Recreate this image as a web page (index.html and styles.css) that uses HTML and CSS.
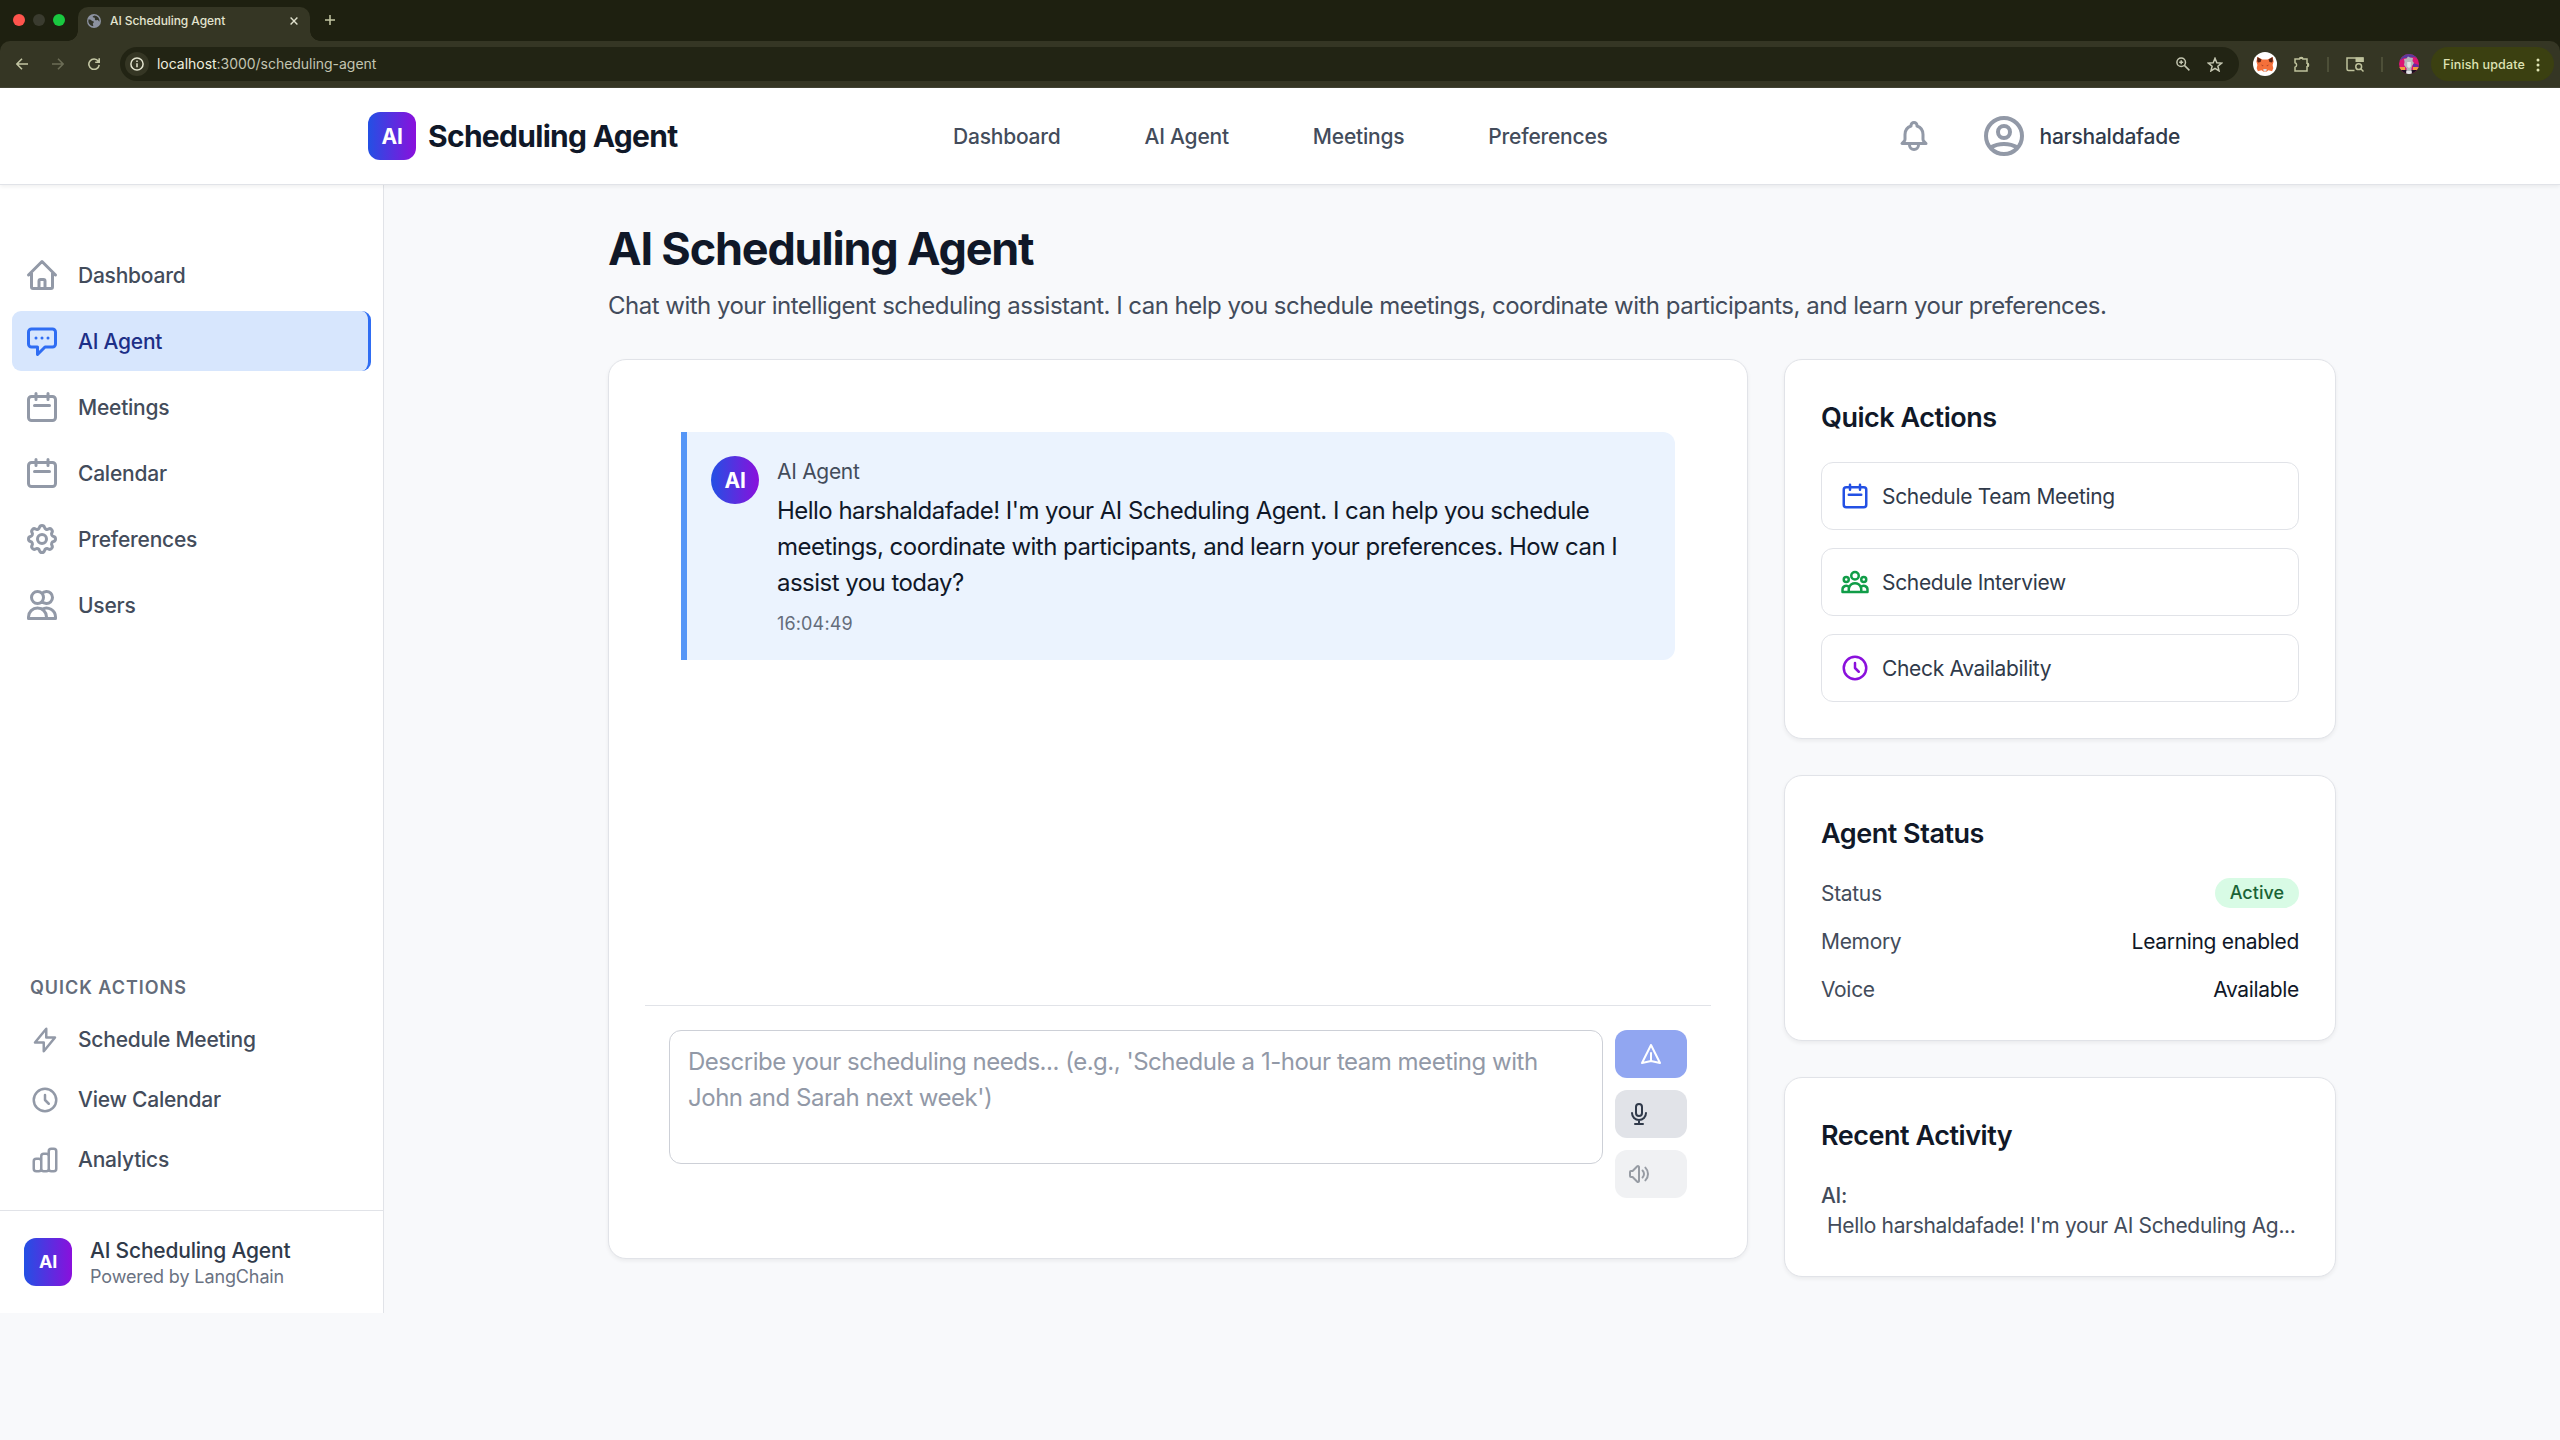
FILE: index.html
```html
<!DOCTYPE html>
<html lang="en">
<head>
<meta charset="utf-8">
<title>AI Scheduling Agent</title>
<link rel="stylesheet" href="styles.css">
</head>
<body>
<svg class="sprite" aria-hidden="true">
  <symbol id="home" viewBox="0 0 24 24"><path d="M3 12l2-2m0 0l7-7 7 7M5 10v10a1 1 0 001 1h3m10-11l2 2m-2-2v10a1 1 0 01-1 1h-3m-6 0a1 1 0 001-1v-4a1 1 0 011-1h2a1 1 0 011 1v4a1 1 0 001 1m-6 0h6"/></symbol>
  <symbol id="chat" viewBox="0 0 24 24"><path d="M8 10h.01M12 10h.01M16 10h.01M9 16H5a2 2 0 01-2-2V6a2 2 0 012-2h14a2 2 0 012 2v8a2 2 0 01-2 2h-5l-5 5v-5z"/></symbol>
  <symbol id="calendar" viewBox="0 0 24 24"><path d="M8 7V3m8 4V3m-9 8h10M5 21h14a2 2 0 002-2V7a2 2 0 00-2-2H5a2 2 0 00-2 2v12a2 2 0 002 2z"/></symbol>
  <symbol id="cog" viewBox="0 0 24 24"><path d="M10.325 4.317c.426-1.756 2.924-1.756 3.35 0a1.724 1.724 0 002.573 1.066c1.543-.94 3.31.826 2.37 2.37a1.724 1.724 0 001.065 2.572c1.756.426 1.756 2.924 0 3.35a1.724 1.724 0 00-1.066 2.573c.94 1.543-.826 3.31-2.37 2.37a1.724 1.724 0 00-2.572 1.065c-.426 1.756-2.924 1.756-3.35 0a1.724 1.724 0 00-2.573-1.066c-1.543.94-3.31-.826-2.37-2.37a1.724 1.724 0 00-1.065-2.572c-1.756-.426-1.756-2.924 0-3.35a1.724 1.724 0 001.066-2.573c-.94-1.543.826-3.31 2.37-2.37.996.608 2.296.07 2.572-1.065z"/><path d="M15 12a3 3 0 11-6 0 3 3 0 016 0z"/></symbol>
  <symbol id="users" viewBox="0 0 24 24"><path d="M12 4.354a4 4 0 110 5.292M15 21H3v-1a6 6 0 0112 0v1zm0 0h6v-1a6 6 0 00-9-5.197M13 7a4 4 0 11-8 0 4 4 0 018 0z"/></symbol>
  <symbol id="bolt" viewBox="0 0 24 24"><path d="M13 10V3L4 14h7v7l9-11h-7z"/></symbol>
  <symbol id="clock" viewBox="0 0 24 24"><path d="M12 8v4l3 3m6-3a9 9 0 11-18 0 9 9 0 0118 0z"/></symbol>
  <symbol id="chart" viewBox="0 0 24 24"><path d="M9 19v-6a2 2 0 00-2-2H5a2 2 0 00-2 2v6a2 2 0 002 2h2a2 2 0 002-2zm0 0V9a2 2 0 012-2h2a2 2 0 012 2v10m-6 0a2 2 0 002 2h2a2 2 0 002-2m0 0V5a2 2 0 012-2h2a2 2 0 012 2v14a2 2 0 01-2 2h-2a2 2 0 01-2-2z"/></symbol>
  <symbol id="group" viewBox="0 0 24 24"><path d="M17 20h5v-2a3 3 0 00-5.356-1.857M17 20H7m10 0v-2c0-.656-.126-1.283-.356-1.857M7 20H2v-2a3 3 0 015.356-1.857M7 20v-2c0-.656.126-1.283.356-1.857m0 0a5.002 5.002 0 019.288 0M15 7a3 3 0 11-6 0 3 3 0 016 0zm6 3a2 2 0 11-4 0 2 2 0 014 0zM7 10a2 2 0 11-4 0 2 2 0 014 0z"/></symbol>
  <symbol id="send" viewBox="0 0 24 24"><path d="M12 19l9 2-9-18-9 18 9-2zm0 0v-8"/></symbol>
  <symbol id="mic" viewBox="0 0 24 24"><path d="M19 11a7 7 0 01-7 7m0 0a7 7 0 01-7-7m7 7v4m0 0H8m4 0h4m-4-8a3 3 0 01-3-3V5a3 3 0 116 0v6a3 3 0 01-3 3z"/></symbol>
  <symbol id="volume" viewBox="0 0 24 24"><path d="M15.536 8.464a5 5 0 010 7.072m2.828-9.9a9 9 0 010 12.728M5.586 15H4a1 1 0 01-1-1v-4a1 1 0 011-1h1.586l4.707-4.707C10.923 3.663 12 4.109 12 5v14c0 .891-1.077 1.337-1.707.707L5.586 15z"/></symbol>
  <symbol id="bell" viewBox="0 0 24 24"><path d="M15 17h5l-1.405-1.405A2.032 2.032 0 0118 14.158V11a6.002 6.002 0 00-4-5.659V5a2 2 0 10-4 0v.341C7.67 6.165 6 8.388 6 11v3.159c0 .538-.214 1.055-.595 1.436L4 17h5m6 0v1a3 3 0 11-6 0v-1m6 0H9"/></symbol>
  <symbol id="user" viewBox="0 0 24 24"><path d="M5.121 17.804A13.937 13.937 0 0112 16c2.5 0 4.847.655 6.879 1.804M15 10a3 3 0 11-6 0 3 3 0 016 0zm6 2a9 9 0 11-18 0 9 9 0 0118 0z"/></symbol>
</svg>

<div class="browser">
  <div class="tabstrip">
    <div class="lights"><i class="light close"></i><i class="light minimize"></i><i class="light maximize"></i></div>
    <div class="tab">
      <svg class="favicon" viewBox="0 0 14 14"><circle cx="7" cy="7" r="7" fill="#8c92a0"/><path d="M1.4 5.6c1.6-.3 2.5.2 3.2 1 .8.9 2 .4 2.2 1.3.2 1-1.200 1.200-1 2.200.1.800.7 1.300.3 2.200A5.600 5.600 0 0 1 1.400 5.600zM7.200 1.400c-.8.600-1.800.9-1.500 1.700.3.7 1.500.2 2 .9.500.8-.2 1.500.5 2 .8.600 1.600-.3 2.500 0 .8.300.8 1.400 1.800 1.400A5.600 5.600 0 0 0 7.200 1.400z" fill="#33352a"/></svg>
      <span class="tab-title">AI Scheduling Agent</span>
      <svg class="tab-close" viewBox="0 0 8 8"><path d="M.6.6l6.800 6.800M7.400.6L.6 7.400"/></svg>
    </div>
    <svg class="tab-new" viewBox="0 0 10 10"><path d="M5 0v10M0 5h10"/></svg>
  </div>
  <div class="toolbar">
    <div class="nav-buttons">
      <svg viewBox="0 0 12 12"><path d="M12 6H1M6 .8L.8 6 6 11.200"/></svg>
      <svg class="dim" viewBox="0 0 12 12"><path d="M0 6h11M6 .8L11.200 6 6 11.200"/></svg>
      <svg viewBox="0 0 12 12"><path d="M10.300 3.200A5.200 5.200 0 1 0 11.200 6.900M11.200.2v4H7.200"/></svg>
    </div>
    <div class="address">
      <span class="site-info"><svg viewBox="0 0 14 14"><circle cx="7" cy="7" r="6.100"/><path d="M7 6.200v4M7 3.600v1.400"/></svg></span>
      <span class="url"><b>localhost</b>:3000/scheduling-agent</span>
      <svg class="zoom-icon" viewBox="0 0 14 14"><circle cx="5.200" cy="5.200" r="4.300"/><path d="M8.400 8.400l5 5M5.200 3.200v4M3.200 5.200h4"/></svg>
      <svg class="star-icon" viewBox="0 0 15 14"><path d="M7.500 1.200l1.700 4.200 4.500.3-3.500 2.900 1.100 4.400-3.800-2.400L3.700 13l1.100-4.400L1.300 5.700l4.500-.3z"/></svg>
    </div>
    <svg class="fox" viewBox="0 0 24 24"><circle cx="12" cy="12" r="12" fill="#fff"/><path d="M4.400 5l5 2.600h5.200l5-2.600 1 4.600-1 3.400.7 3.200-1.200 3-3.600-1-2 1.600h-3l-2-1.600-3.600 1-1.200-3 .7-3.200-1-3.400z" fill="#f4703a"/><path d="M4.400 5l4 2.600-.8 2.400-2.400.6-1-1.400zM19.600 5l-4 2.600.8 2.400 2.400.6 1-1.400z" fill="#5b2415"/><path d="M7.600 12.600l2.800.6-.4 1.400zM16.400 12.600l-2.800.6.4 1.400z" fill="#b3452a"/><path d="M10.300 17h3.400l-.4 2.400h-2.600z" fill="#d9dbe2"/></svg>
    <svg class="puzzle" viewBox="0 0 16 16"><path d="M1 3h4.500a1.700 1.500 0 0 1 3.400 0H13v4.300a1.600 1.700 0 0 1 0 3.400V15H1v-3.800a2.300 2.300 0 0 0 0-4.400z"/><path class="solid" d="M5.300 3a1.900 2 0 0 1 3.800 0zM13 7.100a2 1.900 0 0 1 0 3.800z"/></svg>
    <i class="separator"></i>
    <svg class="panel" viewBox="0 0 18 15"><path d="M8.500 13.500H2.500a1.500 1.500 0 0 1-1.500-1.500V1h16v4"/><path class="solid" d="M9.500.5H17.500V5H9.500z"/><circle cx="12.700" cy="9.700" r="2.900"/><path d="M14.800 11.800l2.700 2.700"/></svg>
    <i class="separator"></i>
    <svg class="profile" viewBox="0 0 20 20"><defs><clipPath id="disc"><circle cx="10" cy="10" r="10"/></clipPath></defs><g clip-path="url(#disc)"><path d="M0 0h20v20H0z" fill="#dc1574"/><path d="M0 0h20v5l-5-2-5 1-5 0-5 3z" fill="#5b3a9c"/><path d="M14 9l6 2v4h-6z" fill="#6a2aa0"/><path d="M0 13h6v3H0zM14 13h6v3h-6z" fill="#f59a3c"/><path d="M0 16h20v4H0z" fill="#1b1020"/><path d="M7 20l.7-5.500L5 11l.5-3L5 5l2.500-.5L9 2.500l2 1L14 4l-.5 3 1.500 2-2 3-.7 3 .7 5z" fill="#b4b6ba"/><path d="M8.200 8h3.600v4.500l-1.800 1.500-1.800-1.500zM7.500 17h5v3h-5z" fill="#e2e4e6"/></g></svg>
    <div class="update"><span>Finish update</span><svg viewBox="0 0 4 14"><circle cx="2" cy="2" r="1.500"/><circle cx="2" cy="7" r="1.500"/><circle cx="2" cy="12" r="1.500"/></svg></div>
  </div>
</div>

<header class="site-header">
  <div class="header-inner">
    <div class="brand"><span class="logo">AI</span><span class="brand-name">Scheduling Agent</span></div>
    <nav class="top-nav"><a>Dashboard</a><a>AI Agent</a><a>Meetings</a><a>Preferences</a></nav>
    <div class="account">
      <svg class="icon i36"><use href="#bell"/></svg>
      <div class="account-user"><svg class="icon i48"><use href="#user"/></svg><span>harshaldafade</span></div>
    </div>
  </div>
</header>

<div class="shell">
  <aside class="sidebar">
    <nav class="side-nav">
      <a class="side-link"><svg class="icon i36"><use href="#home"/></svg><span>Dashboard</span></a>
      <a class="side-link active"><svg class="icon i36"><use href="#chat"/></svg><span>AI Agent</span></a>
      <a class="side-link"><svg class="icon i36"><use href="#calendar"/></svg><span>Meetings</span></a>
      <a class="side-link"><svg class="icon i36"><use href="#calendar"/></svg><span>Calendar</span></a>
      <a class="side-link"><svg class="icon i36"><use href="#cog"/></svg><span>Preferences</span></a>
      <a class="side-link"><svg class="icon i36"><use href="#users"/></svg><span>Users</span></a>
    </nav>
    <div class="side-actions">
      <h3>Quick Actions</h3>
      <a class="side-action"><svg class="icon i30"><use href="#bolt"/></svg><span>Schedule Meeting</span></a>
      <a class="side-action"><svg class="icon i30"><use href="#clock"/></svg><span>View Calendar</span></a>
      <a class="side-action"><svg class="icon i30"><use href="#chart"/></svg><span>Analytics</span></a>
    </div>
    <div class="side-footer">
      <span class="logo small">AI</span>
      <div><p class="footer-name">AI Scheduling Agent</p><p class="footer-sub">Powered by LangChain</p></div>
    </div>
  </aside>

  <main class="main">
    <div class="page">
      <h1>AI Scheduling Agent</h1>
      <p class="lead">Chat with your intelligent scheduling assistant. I can help you schedule meetings, coordinate with participants, and learn your preferences.</p>
      <div class="columns">
        <section class="card chat">
          <div class="messages">
            <article class="message">
              <span class="avatar">AI</span>
              <div class="message-body">
                <p class="author">AI Agent</p>
                <p class="text">Hello harshaldafade! I'm your AI Scheduling Agent. I can help you schedule<br>meetings, coordinate with participants, and learn your preferences. How can I<br>assist you today?</p>
                <p class="time">16:04:49</p>
              </div>
            </article>
          </div>
          <div class="composer">
            <div class="input">Describe your scheduling needs... (e.g., 'Schedule a 1-hour team meeting with<br>John and Sarah next week')</div>
            <div class="buttons">
              <button class="btn send"><svg class="icon i24"><use href="#send"/></svg></button>
              <button class="btn mic"><svg class="icon i24"><use href="#mic"/></svg></button>
              <button class="btn volume"><svg class="icon i24"><use href="#volume"/></svg></button>
            </div>
          </div>
        </section>
        <div class="side-cards">
          <section class="card">
            <h2>Quick Actions</h2>
            <div class="actions">
              <a class="action"><svg class="icon i30 blue"><use href="#calendar"/></svg><span>Schedule Team Meeting</span></a>
              <a class="action"><svg class="icon i30 green"><use href="#group"/></svg><span>Schedule Interview</span></a>
              <a class="action"><svg class="icon i30 purple"><use href="#clock"/></svg><span>Check Availability</span></a>
            </div>
          </section>
          <section class="card">
            <h2>Agent Status</h2>
            <dl class="status">
              <div><dt>Status</dt><dd class="badge">Active</dd></div>
              <div><dt>Memory</dt><dd>Learning enabled</dd></div>
              <div><dt>Voice</dt><dd>Available</dd></div>
            </dl>
          </section>
          <section class="card">
            <h2>Recent Activity</h2>
            <div class="activity">
              <p class="activity-who">AI:</p>
              <p class="activity-text">Hello harshaldafade! I'm your AI Scheduling Ag...</p>
            </div>
          </section>
        </div>
      </div>
    </div>
  </main>
</div>
</body>
</html>
```
FILE: styles.css
```css
* { box-sizing: border-box; }
body { margin: 0; height: 1440px; overflow: hidden; background: #f8f9fb; color: #101828; font: 21px/30px Inter, "Liberation Sans", sans-serif; display: flex; flex-direction: column; }
h1, h2, h3, p, dl, dd { margin: 0; }
svg { display: block; flex: none; }
.sprite { position: absolute; width: 0; height: 0; }
.icon { fill: none; stroke: currentColor; stroke-width: 2; stroke-linecap: round; stroke-linejoin: round; }
.i24 { width: 24px; height: 24px; }
.i30 { width: 30px; height: 30px; }
.i36 { width: 36px; height: 36px; }
.i48 { width: 48px; height: 48px; }

/* Browser window */
.browser { flex: none; height: 88px; background: #1e2010; }
.tabstrip { height: 41px; display: flex; align-items: center; padding-left: 13px; }
.lights { display: flex; gap: 8px; width: 65px; margin-top: -1px; }
.light { width: 12px; height: 12px; border-radius: 50%; }
.close { background: #ff544d; }
.minimize { background: #3a3b2f; }
.maximize { background: #19c840; }
.tab { position: relative; width: 232px; height: 34px; margin-top: 7px; border-radius: 10px 10px 0 0; background: #353624; display: flex; align-items: center; padding: 0 12px 6px 9px; }
.tab::before, .tab::after { content: ""; position: absolute; bottom: 0; width: 10px; height: 10px; }
.tab::before { left: -10px; background: radial-gradient(circle at 0 0, transparent 9.5px, #353624 10px); }
.tab::after { right: -10px; background: radial-gradient(circle at 100% 0, transparent 9.5px, #353624 10px); }
.favicon { width: 14px; height: 14px; margin-right: 9px; }
.tab-title { flex: 1; font-size: 12px; line-height: 16px; font-weight: 500; color: #e3e4cf; letter-spacing: -0.08px; white-space: nowrap; }
.tab-close { width: 8px; height: 8px; fill: none; stroke: #dfe0cc; stroke-width: 1.4; }
.tab-new { width: 10px; height: 10px; margin: -1px 0 0 15px; fill: none; stroke: #c3c6a3; stroke-width: 1.5; }
.toolbar { height: 47px; background: #353624; border-radius: 10px 10px 0 0; border-bottom: 1px solid #424334; display: flex; align-items: center; padding-left: 16px; }
.nav-buttons { display: flex; gap: 24px; width: 104px; }
.nav-buttons svg { width: 12px; height: 12px; fill: none; stroke: #c3c6a3; stroke-width: 1.6; }
.nav-buttons .dim { stroke: #6c6d56; }
.address { width: 2119px; height: 34px; border-radius: 17px; background: #222414; display: flex; align-items: center; padding-left: 5px; }
.site-info { width: 24px; height: 24px; border-radius: 50%; background: #353624; display: grid; place-items: center; }
.site-info svg { width: 14px; height: 14px; fill: none; stroke: #e3e4cf; stroke-width: 1.5; }
.url { margin-left: 8px; flex: 1; font-size: 14px; line-height: 18px; color: #c3c5b2; letter-spacing: -0.03px; }
.url b { font-weight: 400; color: #eeefdf; }
.zoom-icon { width: 14px; height: 14px; margin-right: 17px; fill: none; stroke: #c4c6b0; stroke-width: 1.5; }
.star-icon { width: 16px; height: 15px; margin-right: 16px; fill: none; stroke: #c4c6b0; stroke-width: 1.4; }
.fox { width: 24px; height: 24px; margin-left: 14px; }
.puzzle { width: 16px; height: 16px; margin: -1px 0 0 17px; fill: none; stroke: #bfc29c; stroke-width: 1.5; }
.solid { fill: #bfc29c; stroke: none; }
.separator { width: 2px; height: 15px; margin-left: 17px; background: #4d4f38; }
.panel { width: 18px; height: 15px; margin-left: 17px; fill: none; stroke: #bfc29c; stroke-width: 1.5; }
.profile { width: 20px; height: 20px; margin-left: 16px; }
.update { width: 123px; height: 34px; margin-left: 12px; border-radius: 17px; background: #3b4011; display: flex; align-items: center; padding: 1px 0 0 12px; font-size: 12.5px; font-weight: 500; color: #dfe3b4; white-space: nowrap; letter-spacing: 0.12px; }
.update span { width: 93px; }
.update svg { width: 4px; height: 14px; fill: #dfe3b4; }

/* Site header */
.site-header { position: relative; flex: none; height: 97px; background: #fff; border-bottom: 1px solid #e1e3e8; box-shadow: 0 2px 4px rgba(0,0,0,.06); }
.header-inner { width: 1824px; height: 96px; margin: 0 auto; display: flex; align-items: center; justify-content: space-between; }
.logo { flex: none; width: 48px; height: 48px; border-radius: 12px; padding-top: 1px; background: linear-gradient(90deg, #2350e4, #8a10dc); color: #fff; font-weight: 700; font-size: 21px; letter-spacing: -0.3px; display: grid; place-items: center; }
.logo.small { font-size: 18px; padding-top: 0; }
.brand { display: flex; align-items: center; gap: 12px; width: 567px; }
.brand-name { font-size: 30px; line-height: 42px; font-weight: 700; letter-spacing: -0.7px; white-space: nowrap; }
.top-nav { display: flex; flex: 1; gap: 48px; padding-top: 2px; font-weight: 500; color: #434c5b; letter-spacing: -0.22px; }
.top-nav a { padding: 0 18px; white-space: nowrap; }
.account { display: flex; align-items: center; gap: 48px; color: #9299a7; }
.account-user { display: flex; align-items: center; gap: 12px; padding-right: 12px; }
.account-user span { padding-top: 2px; color: #303a4a; font-weight: 500; letter-spacing: -0.24px; }

/* Sidebar */
.shell { display: flex; align-items: flex-start; }
.sidebar { flex: none; width: 384px; height: 1128px; background: #fff; border-right: 1px solid #e1e3e8; display: flex; flex-direction: column; }
.side-nav { padding: 60px 12px 0; display: grid; gap: 6px; flex: 1; align-content: start; }
.side-link { height: 60px; display: flex; align-items: center; gap: 18px; padding: 0 12px; border-radius: 9px; color: #9299a7; }
.side-link span, .side-action span { color: #434c5b; font-weight: 500; letter-spacing: -0.23px; }
.side-link span { padding-top: 2px; }
.side-link.active { background: #d7e6fd; border-right: 3px solid #2f6df3; color: #2f6df3; }
.side-link.active span { color: #1d2f87; }
.side-actions { padding: 0 30px 20px; }
.side-actions h3 { font-size: 18px; line-height: 24px; font-weight: 600; text-transform: uppercase; color: #646c7a; letter-spacing: 0.96px; margin-bottom: 10px; }
.side-action { height: 60px; display: flex; align-items: center; gap: 18px; color: #9299a7; }
.side-footer { border-top: 1px solid #e1e3e8; padding: 24px; display: flex; align-items: center; gap: 18px; height: 103px; }
.footer-name { padding-top: 1px; line-height: 29px; font-weight: 500; color: #303a4a; letter-spacing: -0.2px; }
.footer-sub { font-size: 18px; line-height: 24px; color: #6a7282; letter-spacing: -0.12px; }

/* Content */
.main { flex: 1; padding-top: 37px; }
.page { width: 1728px; margin: 0 auto; }
h1 { font-size: 45px; line-height: 54px; font-weight: 700; letter-spacing: -1.18px; }
.lead { margin-top: 12px; font-size: 24px; line-height: 36px; color: #434c5b; letter-spacing: -0.51px; white-space: nowrap; }
.columns { margin-top: 35px; display: flex; gap: 36px; align-items: flex-start; }
.card { background: #fff; border: 1px solid #e1e3e8; border-radius: 18px; padding: 36px; box-shadow: 0 2px 4px rgba(0,0,0,.06); }
.chat { flex: none; width: 1140px; height: 900px; display: flex; flex-direction: column; }
.messages { flex: 1; padding: 36px; }
.message { width: 994px; height: 228px; background: #ebf3fe; border-left: 6px solid #5596f7; border-radius: 0 12px 12px 0; padding: 24px; display: flex; gap: 18px; }
.message-body { padding-top: 1px; }
.avatar { flex: none; width: 48px; height: 48px; border-radius: 50%; padding-top: 1px; background: linear-gradient(90deg, #2350e4, #8a10dc); color: #fff; font-weight: 700; letter-spacing: -0.3px; display: grid; place-items: center; }
.author { color: #434c5b; margin-bottom: 6px; letter-spacing: -0.3px; }
.text { font-size: 24px; line-height: 36px; letter-spacing: -0.53px; white-space: nowrap; }
.time { margin-top: 11px; font-size: 18px; line-height: 24px; color: #646c7a; letter-spacing: 0.15px; }
.composer { height: 217px; border-top: 1px solid #e1e3e8; padding: 24px; display: flex; align-items: flex-start; gap: 12px; }
.input { width: 934px; height: 134px; border: 1.5px solid #cdd0d7; border-radius: 12px; padding: 13px 18px; font-size: 24px; line-height: 36px; color: #9299a7; letter-spacing: -0.48px; white-space: nowrap; }
.buttons { display: grid; gap: 12px; }
.btn { width: 72px; height: 48px; border: 0; border-radius: 12px; padding: 0 12px; display: flex; align-items: center; }
.send { justify-content: center; background: #91a6f1; color: #fff; }
.mic { background: #e1e3e8; color: #303a4a; }
.volume { background: #f0f1f3; color: #979ca4; }
.side-cards { flex: none; width: 552px; display: grid; grid-template-columns: minmax(0, 1fr); gap: 36px; }
h2 { padding-top: 1px; font-size: 27px; line-height: 42px; font-weight: 600; letter-spacing: -0.47px; margin-bottom: 23px; }
.actions { display: grid; gap: 18px; }
.action { height: 68px; border: 1px solid #e1e3e8; border-radius: 12px; padding: 0 18px; display: flex; align-items: center; gap: 12px; color: #303a4a; letter-spacing: -0.33px; }
.action span { padding-top: 2px; }
.blue { color: #2350e4; }
.green { color: #119d48; }
.purple { color: #8a10dc; }
.status { display: grid; gap: 18px; letter-spacing: -0.32px; }
.status div { display: flex; justify-content: space-between; height: 30px; }
.status dt, .status dd { padding-top: 1px; }
.status dt { color: #434c5b; }
.status .badge { font-size: 18px; line-height: 30px; font-weight: 500; letter-spacing: 0; background: #d8fbe5; color: #1a6336; border-radius: 15px; padding: 0 15px; }
.activity { height: 60px; padding-top: 1px; color: #434c5b; letter-spacing: -0.33px; white-space: nowrap; }
.activity-who { font-weight: 500; }
.activity-text { padding-left: 6px; }
```
